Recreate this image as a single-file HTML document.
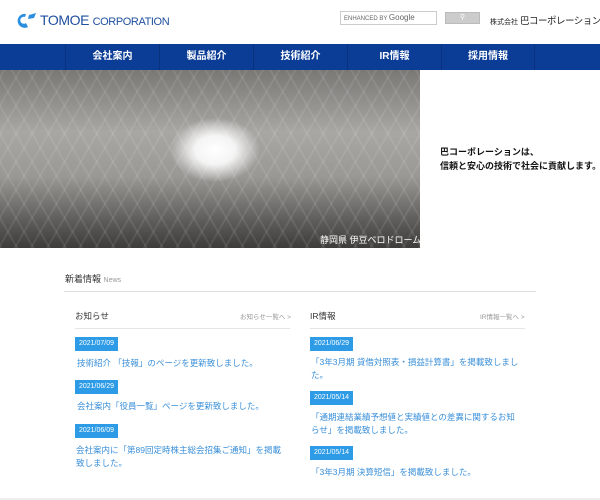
<!DOCTYPE html><html><head><meta charset="utf-8"><style>
*{margin:0;padding:0;box-sizing:border-box}
body{width:600px;height:500px;overflow:hidden;background:#fff;font-family:"Liberation Sans","Noto Sans CJK JP",sans-serif;position:relative}
.a{position:absolute;white-space:nowrap}
.nav{position:absolute;top:44px;left:0;width:600px;height:26px;background:#0b3d97}
.nav div{position:absolute;top:0;height:26px;line-height:26px;color:#fff;font-size:10px;font-weight:bold;text-align:center;width:94px;border-left:1px solid #08327e}
.date{position:absolute;background:#2d9be6;color:#fff;font-size:7px;width:43px;height:14px;line-height:14px;text-align:center}
.lk{position:absolute;color:#3a8fd8;font-size:8.5px;line-height:13px;width:210px;white-space:normal}
</style></head><body>
<svg class="a" style="left:14px;top:12px" width="24" height="17" viewBox="0 0 24 17"><path d="M12 2 A7 7 0 1 0 14 15 L12 11 A3.5 3.5 0 1 1 11 5Z" fill="#2b8fe0"/><path d="M15 3 l7-2 -2 5 -6 1z" fill="#2b8fe0"/></svg>
<div class="a" style="left:40px;top:12px;font-size:14px;color:#1f4f9f;letter-spacing:-.4px">TOMOE <span style="font-size:11px">CORPORATION</span></div>
<div class="a" style="left:340px;top:11px;width:97px;height:14px;border:1px solid #ccc;font-size:6px;color:#666;line-height:12px;padding-left:3px">ENHANCED BY <span style="font-size:8px">Google</span></div>
<div class="a" style="left:445px;top:12px;width:35px;height:12px;background:#ccc;border:1px solid #bbb;color:#fff;font-size:7px;text-align:center;line-height:10px">&#9906;</div>
<div class="a" style="left:490px;top:13px;font-size:7px;color:#222">株式会社 <span style="font-size:9.5px;letter-spacing:-.5px">巴コーポレーション</span></div>
<div class="nav"><div style="left:65px">会社案内</div><div style="left:159px">製品紹介</div><div style="left:253px">技術紹介</div><div style="left:347px">IR情報</div><div style="left:441px;border-right:1px solid #08327e">採用情報</div></div>
<div class="a" style="left:0;top:70px;width:420px;height:178px;background:radial-gradient(ellipse 45px 32px at 215px 80px,#fff 0%,#f4f4f4 45%,rgba(200,200,200,0) 100%),linear-gradient(180deg,#7a7875 0%,#a9a7a3 35%,#9a9894 60%,#5e5c5a 85%,#3d3c3b 100%)"></div>
<div class="a" style="left:0;top:70px;width:420px;height:178px;background:repeating-linear-gradient(60deg,rgba(255,255,255,.08) 0 2px,transparent 2px 14px),repeating-linear-gradient(-60deg,rgba(255,255,255,.08) 0 2px,transparent 2px 14px)"></div>
<div class="a" style="left:320px;top:233px;font-size:9px;color:#fff">静岡県 伊豆ベロドローム</div>
<div class="a" style="left:440px;top:145px;font-size:9px;font-weight:bold;color:#111;line-height:14px">巴コーポレーションは、<br>信頼と安心の技術で社会に貢献します。</div>
<div class="a" style="left:65px;top:272px;font-size:9px;color:#333">新着情報 <span style="font-size:7px;color:#999">News</span></div>
<div class="a" style="left:64px;top:291px;width:472px;height:1px;background:#ddd"></div>
<div class="a" style="left:75px;top:310px;font-size:8.5px;color:#333">お知らせ</div>
<div class="a" style="left:240px;top:311px;font-size:6.5px;color:#999">お知らせ一覧へ &gt;</div>
<div class="a" style="left:75px;top:328px;width:215px;height:1px;background:#e5e5e5"></div>
<div class="a" style="left:310px;top:310px;font-size:8.5px;color:#333">IR情報</div>
<div class="a" style="left:480px;top:311px;font-size:6.5px;color:#999">IR情報一覧へ &gt;</div>
<div class="a" style="left:310px;top:328px;width:215px;height:1px;background:#e5e5e5"></div>
<div class="date" style="left:75px;top:337px">2021/07/09</div>
<div class="lk" style="left:77px;top:357px">技術紹介 「技報」のページを更新致しました。</div>
<div class="date" style="left:75px;top:380px">2021/06/29</div>
<div class="lk" style="left:77px;top:400px">会社案内「役員一覧」ページを更新致しました。</div>
<div class="date" style="left:75px;top:424px">2021/06/09</div>
<div class="lk" style="left:76px;top:444px">会社案内に「第89回定時株主総会招集ご通知」を掲載致しました。</div>
<div class="date" style="left:310px;top:337px">2021/06/29</div>
<div class="lk" style="left:311px;top:356px">「3年3月期 貸借対照表・損益計算書」を掲載致しました。</div>
<div class="date" style="left:310px;top:391px">2021/05/14</div>
<div class="lk" style="left:311px;top:411px">「通期連結業績予想値と実績値との差異に関するお知らせ」を掲載致しました。</div>
<div class="date" style="left:310px;top:446px">2021/05/14</div>
<div class="lk" style="left:311px;top:466px">「3年3月期 決算短信」を掲載致しました。</div>
<div class="a" style="left:0;top:498px;width:600px;height:2px;background:#eee"></div>
</body></html>
